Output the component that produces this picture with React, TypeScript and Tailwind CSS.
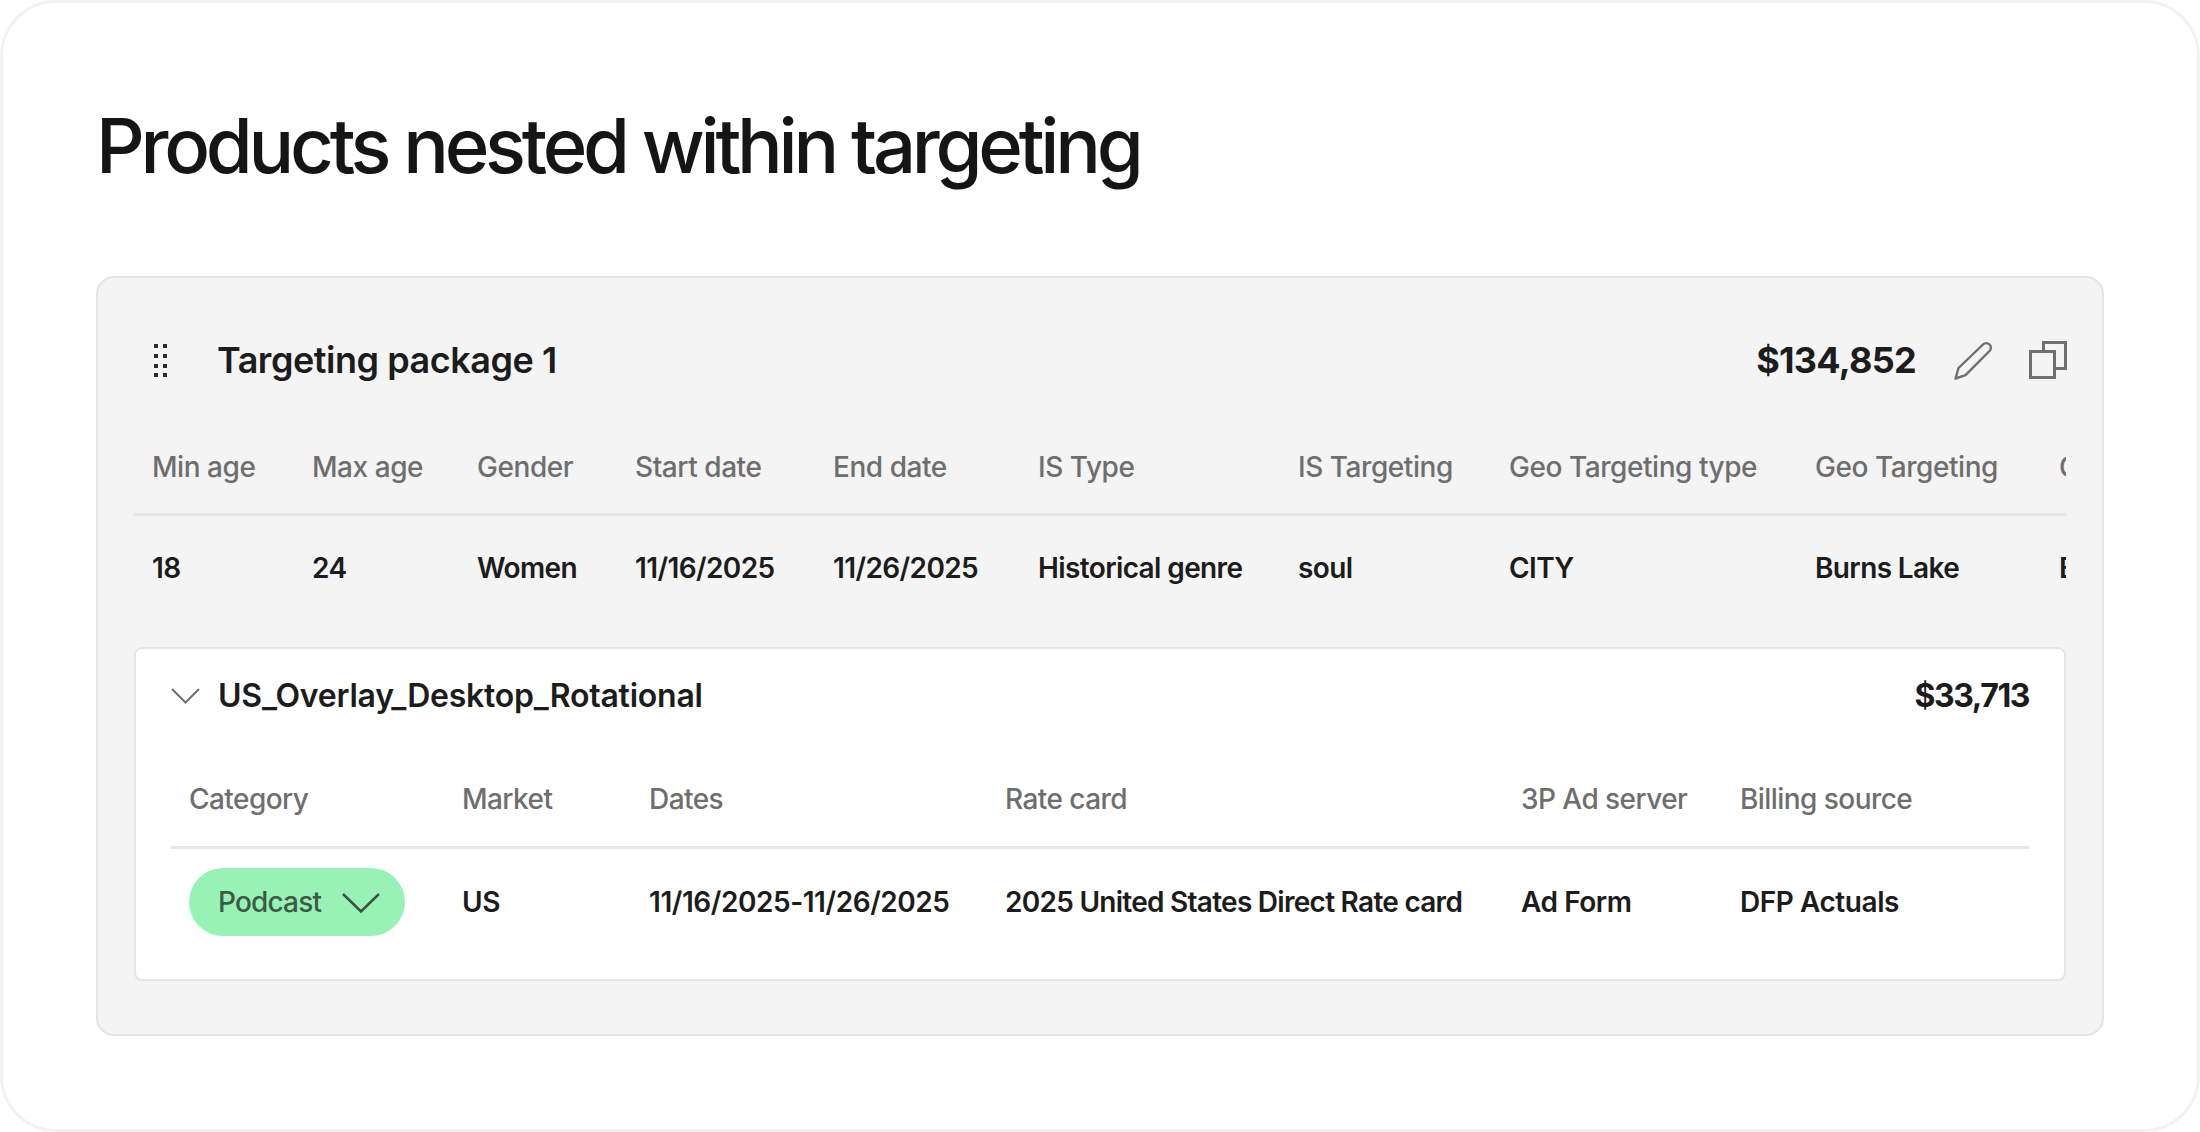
import React from "react";

const packageCols = [
  { label: "Min age", value: "18", width: "w-[160px]" },
  { label: "Max age", value: "24", width: "w-[165px]" },
  { label: "Gender", value: "Women", width: "w-[158px]" },
  { label: "Start date", value: "11/16/2025", width: "w-[198px]" },
  { label: "End date", value: "11/26/2025", width: "w-[205px]" },
  { label: "IS Type", value: "Historical genre", width: "w-[260px]" },
  { label: "IS Targeting", value: "soul", width: "w-[211px]" },
  { label: "Geo Targeting type", value: "CITY", width: "w-[306px]" },
  { label: "Geo Targeting", value: "Burns Lake", width: "w-[244px]" },
  { label: "Geo Targeting ID", value: "B", width: "w-[220px]" },
];

const productCols = [
  { label: "Category", width: "w-[273px]" },
  { label: "Market", width: "w-[187px]" },
  { label: "Dates", width: "w-[356px]" },
  { label: "Rate card", width: "w-[516px]" },
  { label: "3P Ad server", width: "w-[219px]" },
  { label: "Billing source", width: "w-[290px]" },
];

const productValues = [
  { value: "US", width: "w-[187px]" },
  { value: "11/16/2025-11/26/2025", width: "w-[356px]" },
  { value: "2025 United States Direct Rate card", width: "w-[516px] tracking-[-0.026em]" },
  { value: "Ad Form", width: "w-[219px]" },
  { value: "DFP Actuals", width: "w-[290px]" },
];

const GripIcon = () => (
  <svg width="14" height="34" viewBox="0 0 14 34" fill="#2b2b2b" className="shrink-0">
    {[1, 11, 21, 30].map((y) => (
      <g key={y}>
        <rect x="0" y={y} width="4" height="4" />
        <rect x="9" y={y} width="4" height="4" />
      </g>
    ))}
  </svg>
);

const PencilIcon = () => (
  <svg width="40" height="40" viewBox="0 0 40 40" fill="none" stroke="#6f6f6f" strokeWidth="2.4" strokeLinejoin="round">
    <path d="M2.5 38.5 5.5 28 30 4.5a4.5 4.5 0 0 1 6.5 0 4.5 4.5 0 0 1 0 6.5L12.5 35.2Z" />
  </svg>
);

const CopyIcon = () => (
  <svg width="38" height="38" viewBox="0 0 38 38" fill="none" stroke="#6f6f6f" strokeWidth="3" className="-mr-[1px]">
    <rect x="1.5" y="10.5" width="24" height="26" />
    <path d="M14.5 9V1.5h22v26H27" />
  </svg>
);

const Chevron = ({ w, h, color, sw }: { w: number; h: number; color: string; sw: number }) => (
  <svg width={w} height={h} viewBox={`0 0 ${w} ${h}`} fill="none" stroke={color} strokeWidth={sw} className="shrink-0">
    <path d={`M1 1 ${w / 2} ${h - 1.5} ${w - 1} 1`} />
  </svg>
);

export default function App() {
  return (
    <div className="w-[2200px] h-[1132px] bg-white border-[3px] border-[#f2f2f2] rounded-[56px] pl-[93px] pt-[96px] font-['Inter',sans-serif] overflow-hidden">
      <h1 className="text-[76px] leading-[92px] font-medium tracking-[-0.056em] text-[#151515]">
        Products nested within targeting
      </h1>

      <div className="mt-[85px] w-[2008px] h-[760px] bg-[#f4f4f4] border-2 border-[#e4e4e4] rounded-[18px] px-[36px]">
        <div className="flex items-center h-[160px] pt-[3px]">
          <div className="ml-[20px] w-[63px]">
            <GripIcon />
          </div>
          <span className="text-[36px] font-semibold tracking-[-0.013em] text-[#1c1c1c]">Targeting package 1</span>
          <span className="ml-auto text-[36px] font-bold tracking-[-0.02em] text-[#1c1c1c]">$134,852</span>
          <div className="ml-[37px] mr-[36px]">
            <PencilIcon />
          </div>
          <CopyIcon />
        </div>

        <div className="overflow-hidden">
          <div className="flex w-[2300px] pl-[18px] h-[78px] pb-[17px] items-center border-b-[3px] border-[#e6e6e6] text-[28px] font-medium tracking-[-0.016em] text-[#6e6e6e]">
            {packageCols.map((col) => (
              <div key={col.label} className={`${col.width} shrink-0`}>{col.label}</div>
            ))}
          </div>
          <div className="flex w-[2300px] pl-[18px] h-[104px] items-center text-[28px] font-semibold tracking-[-0.022em] text-[#1c1c1c]">
            {packageCols.map((col) => (
              <div key={col.label} className={`${col.width} shrink-0`}>{col.value}</div>
            ))}
          </div>
        </div>

        <div className="h-[334px] mt-[27px] bg-white border-2 border-[#e6e6e6] rounded-[8px] px-[35px]">
          <div className="flex items-center h-[93px]">
            <div className="mr-[18px]">
              <Chevron w={29} h={16} color="#6e6e6e" sw={2} />
            </div>
            <span className="text-[32px] font-semibold tracking-[-0.007em] text-[#1c1c1c]">US_Overlay_Desktop_Rotational</span>
            <span className="ml-auto text-[32px] font-bold tracking-[-0.045em] text-[#1c1c1c]">$33,713</span>
          </div>
          <div className="flex pl-[18px] h-[107px] pt-[9px] items-center border-b-[3px] border-[#e8e8e8] text-[28px] font-medium tracking-[-0.02em] text-[#6e6e6e]">
            {productCols.map((col) => (
              <div key={col.label} className={`${col.width} shrink-0`}>{col.label}</div>
            ))}
          </div>
          <div className="flex pl-[18px] h-[105px] items-center text-[28px] font-semibold tracking-[-0.016em] text-[#1c1c1c]">
            <div className="w-[273px] shrink-0">
              <div className="flex items-center w-[216px] h-[68px] rounded-full bg-[#98f2b5] pl-[29px] text-[#3c5a48] font-medium tracking-[-0.03em]">
                <span>Podcast</span>
                <div className="ml-[21px] mt-[2px]">
                  <Chevron w={38} h={20} color="#3f4f45" sw={2.5} />
                </div>
              </div>
            </div>
            {productValues.map((col) => (
              <div key={col.value} className={`${col.width} shrink-0`}>{col.value}</div>
            ))}
          </div>
        </div>
      </div>
    </div>
  );
}
